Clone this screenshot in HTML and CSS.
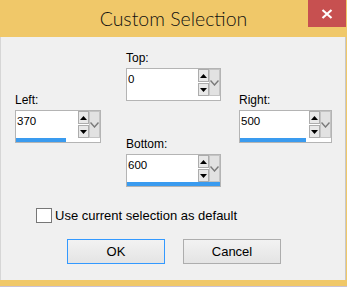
FILE: index.html
```html
<!DOCTYPE html>
<html lang="en">
<head>
    <meta charset="UTF-8">
    <meta name="viewport" content="width=device-width, initial-scale=1.0">
    <title>Custom Selection</title>
    <link rel="stylesheet" href="styles.css">
</head>
<body>
    <div class="window">
        <div class="titlebar">
            <span class="title">Custom Selection</span>
            <button class="close" aria-label="Close">
                <svg width="12" height="10" viewBox="0 0 12 10"><path d="M1.5 1 L10.5 9 M10.5 1 L1.5 9" stroke="#fff" stroke-width="2.2" fill="none"/></svg>
            </button>
        </div>
        <div class="content">
            <div class="fields">
                <div class="col col-side">
                    <div class="field">
                        <label class="field-label">Left:</label>
                        <div class="spin spin-left">
                            <div class="spin-row">
                                <input class="spin-value" value="370">
                                <div class="spin-arrows">
                                    <span class="arrow"><svg width="7" height="4" viewBox="0 0 7 4"><polygon points="0,4 7,4 3.5,0" fill="#000"/></svg></span>
                                    <span class="arrow"><svg width="7" height="4" viewBox="0 0 7 4"><polygon points="0,0 7,0 3.5,4" fill="#000"/></svg></span>
                                </div>
                                <div class="spin-drop"><svg width="9" height="6" viewBox="0 0 9 6"><path d="M0.5 0.5 L4.5 5 L8.5 0.5" stroke="#7a7a7a" stroke-width="1.4" fill="none"/></svg></div>
                            </div>
                            <div class="spin-bar"><div class="spin-fill" style="width:50px"></div></div>
                        </div>
                    </div>
                </div>
                <div class="col col-center">
                    <div class="field">
                        <label class="field-label">Top:</label>
                        <div class="spin spin-wide">
                            <div class="spin-row">
                                <input class="spin-value" value="0">
                                <div class="spin-arrows">
                                    <span class="arrow"><svg width="7" height="4" viewBox="0 0 7 4"><polygon points="0,4 7,4 3.5,0" fill="#000"/></svg></span>
                                    <span class="arrow"><svg width="7" height="4" viewBox="0 0 7 4"><polygon points="0,0 7,0 3.5,4" fill="#000"/></svg></span>
                                </div>
                                <div class="spin-drop"><svg width="9" height="6" viewBox="0 0 9 6"><path d="M0.5 0.5 L4.5 5 L8.5 0.5" stroke="#7a7a7a" stroke-width="1.4" fill="none"/></svg></div>
                            </div>
                            <div class="spin-bar"><div class="spin-fill" style="width:0px"></div></div>
                        </div>
                    </div>
                    <div class="field field-bottom">
                        <label class="field-label">Bottom:</label>
                        <div class="spin spin-wide">
                            <div class="spin-row">
                                <input class="spin-value" value="600">
                                <div class="spin-arrows">
                                    <span class="arrow"><svg width="7" height="4" viewBox="0 0 7 4"><polygon points="0,4 7,4 3.5,0" fill="#000"/></svg></span>
                                    <span class="arrow"><svg width="7" height="4" viewBox="0 0 7 4"><polygon points="0,0 7,0 3.5,4" fill="#000"/></svg></span>
                                </div>
                                <div class="spin-drop"><svg width="9" height="6" viewBox="0 0 9 6"><path d="M0.5 0.5 L4.5 5 L8.5 0.5" stroke="#7a7a7a" stroke-width="1.4" fill="none"/></svg></div>
                            </div>
                            <div class="spin-bar"><div class="spin-fill" style="width:100%"></div></div>
                        </div>
                    </div>
                </div>
                <div class="col col-side">
                    <div class="field">
                        <label class="field-label">Right:</label>
                        <div class="spin spin-right">
                            <div class="spin-row">
                                <input class="spin-value" value="500">
                                <div class="spin-arrows">
                                    <span class="arrow"><svg width="7" height="4" viewBox="0 0 7 4"><polygon points="0,4 7,4 3.5,0" fill="#000"/></svg></span>
                                    <span class="arrow"><svg width="7" height="4" viewBox="0 0 7 4"><polygon points="0,0 7,0 3.5,4" fill="#000"/></svg></span>
                                </div>
                                <div class="spin-drop"><svg width="9" height="6" viewBox="0 0 9 6"><path d="M0.5 0.5 L4.5 5 L8.5 0.5" stroke="#7a7a7a" stroke-width="1.4" fill="none"/></svg></div>
                            </div>
                            <div class="spin-bar"><div class="spin-fill" style="width:66px"></div></div>
                        </div>
                    </div>
                </div>
            </div>
            <label class="option"><span class="check"></span>Use current selection as default</label>
            <div class="actions">
                <button class="btn btn-default">OK</button>
                <button class="btn">Cancel</button>
            </div>
        </div>
    </div>
</body>
</html>
```

FILE: styles.css
```css
body {
    margin: 0;
    background-color: #f0c869;
    font-family: "Liberation Sans", Arial, sans-serif;
}
.window {
    width: 347px;
    height: 286px;
    display: flex;
    flex-direction: column;
    background-color: #f0c869;
    border-bottom: 1px solid #cbc3d3;
}
.titlebar {
    height: 37px;
    display: grid;
    grid-template-columns: 39px 1fr 39px;
}
.title {
    grid-column: 2;
    text-align: center;
    font-family: Lato, "Open Sans", sans-serif;
    font-weight: 300;
    font-size: 19.5px;
    line-height: 38px;
    color: #111;
}
.close {
    grid-column: 3;
    width: 38px;
    height: 27px;
    padding: 0;
    border: none;
    background-color: #c75050;
    display: flex;
    align-items: center;
    justify-content: center;
}
.content {
    height: 243px;
    margin-right: 1px;
    box-sizing: border-box;
    background-color: #f0f0f0;
    border-left: 1px solid #d6d6d6;
    border-right: 1px solid #c8c8c8;
}
.fields {
    display: flex;
    padding: 14px 0 0 14px;
}
.col-side {
    padding-top: 42px;
}
.col-center {
    margin: 0 18px 0 25px;
}
.field-bottom {
    margin-top: 36px;
}
.field-label {
    display: block;
    font-size: 12px;
    line-height: 15px;
    margin-bottom: 2px;
    color: #000;
}
.spin {
    box-sizing: border-box;
    height: 33px;
    border: 1px solid #b4b4b4;
    background-color: #fff;
}
.spin-left { width: 86px; }
.spin-wide { width: 95px; }
.spin-right { width: 93px; }
.spin-row {
    display: flex;
    height: 27px;
}
.spin-value {
    flex: 1;
    min-width: 0;
    border: none;
    outline: none;
    padding: 3px 0 0 1px;
    margin: 0;
    align-self: flex-start;
    font-family: "Liberation Sans", Arial, sans-serif;
    font-size: 11.5px;
    line-height: 13px;
    height: 16px;
    box-sizing: border-box;
    color: #000;
    background: transparent;
}
.spin-arrows {
    width: 11px;
    display: flex;
    flex-direction: column;
    gap: 1px;
}
.arrow {
    box-sizing: border-box;
    height: 13px;
    border: 1px solid #acacac;
    background-color: #e8e8e8;
    display: flex;
    align-items: center;
    justify-content: center;
}
.spin-drop {
    width: 11px;
    box-sizing: border-box;
    border: 1px solid #c4c4c4;
    background-color: #e2e2e2;
    display: flex;
    align-items: center;
    justify-content: center;
}
.spin-bar {
    height: 4px;
}
.spin-fill {
    height: 4px;
    background-color: #3a9bef;
}
.option {
    display: flex;
    align-items: center;
    margin: 21px 0 0 35px;
    font-size: 13px;
    line-height: 15px;
    color: #000;
}
.check {
    box-sizing: border-box;
    width: 16px;
    height: 15px;
    margin-right: 3px;
    border: 1px solid #777;
    background-color: #fff;
}
.actions {
    display: flex;
    gap: 18px;
    margin: 16px 0 0 66px;
}
.btn {
    width: 98px;
    height: 25px;
    padding: 0;
    border: 1px solid #adadad;
    background: linear-gradient(#f2f2f2, #e4e4e4);
    font-family: "Liberation Sans", Arial, sans-serif;
    font-size: 13px;
    color: #000;
}
.btn-default {
    border-color: #3399ff;
}
```
